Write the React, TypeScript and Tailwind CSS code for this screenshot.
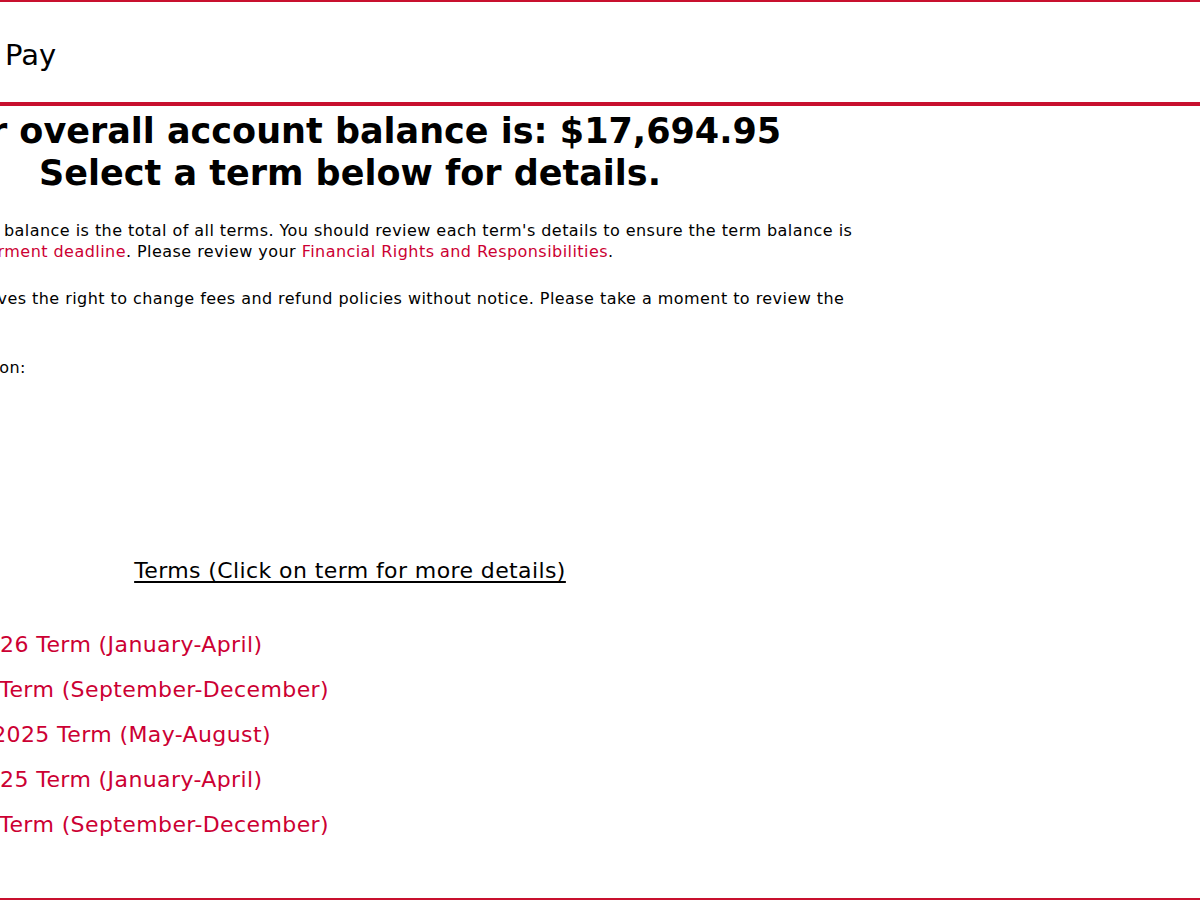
import React from 'react';

const terms = [
    'Winter 2026 Term (January-April)',
    'Fall 2025 Term (September-December)',
    'Summer 2025 Term (May-August)',
    'Winter 2025 Term (January-April)',
    'Fall 2024 Term (September-December)',
];

const linkClass = 'text-[#cc0033] no-underline hover:underline';

const App: React.FC = () => (
    <div className="min-h-[900px] bg-white border-t-2 border-b-2 border-[#c8102e] flex flex-col overflow-hidden text-black font-['DejaVu_Sans','Verdana',sans-serif]">
        <header className="h-[104px] shrink-0 flex items-center pl-[5px] pt-1.5 border-b-4 border-[#c8102e]">
            <span className="text-[29px] leading-none">Pay</span>
        </header>

        <main className="flex-1 ml-[-173px] w-[1046px] pt-1">
            <h1 className="text-center font-bold text-[35px] leading-[42px] whitespace-nowrap">
                Your overall account balance is: $17,694.95
                <br />
                Select a term below for details.
            </h1>

            <div className="text-[16px] leading-[21px] tracking-[0.45px] whitespace-nowrap">
                <p className="mt-[26px]">
                    Your overall account balance is the total of all terms. You should review each term's details to ensure the term balance is
                    <br />
                    paid by the fee <a href="#" className={linkClass}>deferment deadline</a>. Please review your{' '}
                    <a href="#" className={linkClass}>Financial Rights and Responsibilities</a>.
                </p>
                <p className="mt-[26px]">
                    The University reserves the right to change fees and refund policies without notice. Please take a moment to review the
                    <br />
                    fee schedule.
                </p>
                <p className="mt-[27px]">For further information:</p>
            </div>

            <section className="mt-[180px] text-[22px] tracking-[0.4px]">
                <h2 className="text-center leading-[26px] underline underline-offset-[3px]">
                    Terms (Click on term for more details)
                </h2>
                <ul className="mt-[38px] pl-[62px]">
                    {terms.map((t) => (
                        <li key={t} className="leading-[45px]">
                            <a href="#" className={linkClass}>{t}</a>
                        </li>
                    ))}
                </ul>
            </section>
        </main>
    </div>
);

export default App;
